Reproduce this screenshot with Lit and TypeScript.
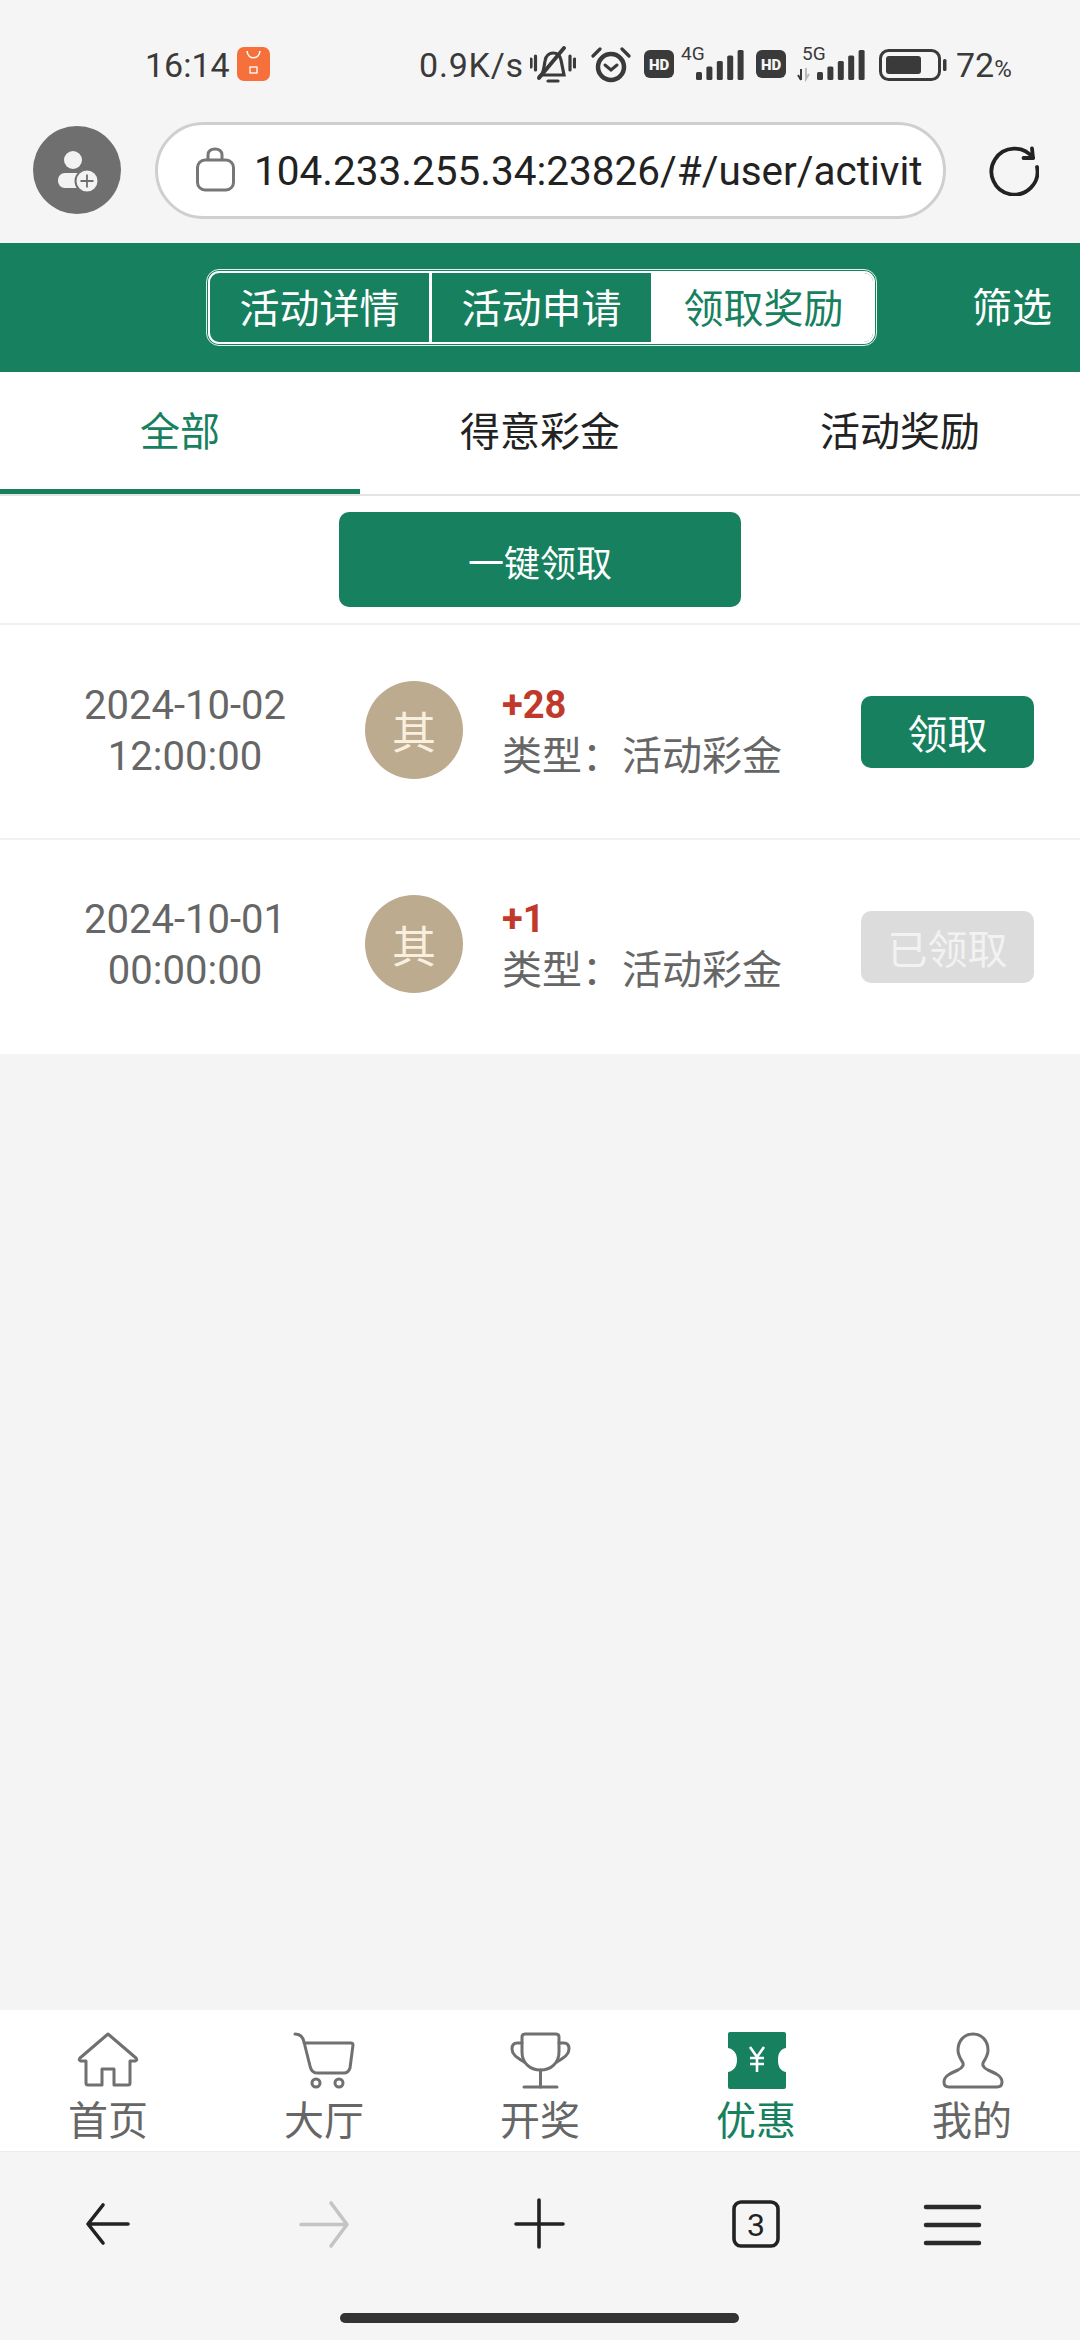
import { LitElement, html, css, svg } from "lit";
import { customElement } from "lit/decorators.js";

const records = [
  { date: "2024-10-02", time: "12:00:00", amount: "+28", done: false },
  { date: "2024-10-01", time: "00:00:00", amount: "+1", done: true },
];

const bars = (x0: number) =>
  [0, 1, 2, 3, 4].map((i) => {
    const h = 8 + i * 5.5;
    return svg`<rect x=${x0 + i * 10.4} y=${30 - h} width="6" height=${h} rx="1.5" fill="#3a3a3a"></rect>`;
  });

const tabIcons = {
  home: svg`<path d="M30 2 L2 26 Q0 28 3 29 H8 V51 Q8 53 10 53 H24 V37 H36 V53 H50 Q52 53 52 51 V29 H57 Q60 28 58 26 Z" fill="none" stroke="#707070" stroke-width="3" stroke-linejoin="round"></path>`,
  cart: svg`<g fill="none" stroke="#707070" stroke-width="3" stroke-linecap="round" stroke-linejoin="round"><path d="M1 2 C6 2 9 5 10 10 L16 34 C17 39 19 41 23 41 H50 C53 41 55 39 56 36 L59 13 C59 11 58 11 57 11 H10"></path><circle cx="22" cy="51" r="4"></circle><circle cx="45" cy="51" r="4"></circle></g>`,
  trophy: svg`<g fill="none" stroke="#707070" stroke-width="3" stroke-linecap="round" stroke-linejoin="round"><path d="M15 2 H46 Q49 2 49 5 V20 C49 31 41 38 30.500 38 C20 38 12 31 12 20 V5 Q12 2 15 2 Z"></path><path d="M12 11 H7 C3 11 2 14 2 17 C2 23 8 26 14 30"></path><path d="M49 11 H54 C58 11 59 14 59 17 C59 23 53 26 47 30"></path><path d="M30.500 38 V55"></path><path d="M14 55 H47"></path></g>`,
  ticket: svg`<path class="tk" d="M4 0 H58 a2 2 0 0 1 2 2 V16 C54 17 52 22 52 28 C52 34 54 39 60 40 V55 a2 2 0 0 1 -2 2 H4 a2 2 0 0 1 -2 -2 V40 C8 39 11 34 11 28 C11 22 8 17 2 16 V2 a2 2 0 0 1 2 -2 Z"></path><path d="M24 15 L31 25 L38 15 M24 26 H38 M24 32 H38 M31 25 V40" fill="none" stroke="#fff" stroke-width="2.600"></path>`,
  user: svg`<path d="M31 2 C22 2 16 9 16 18 C16 24 19 27 21 31 C22 34 20 36 16 38 C9 41 2 44 2 50 C2 54 4 55 7 55 H55 C58 55 60 54 60 50 C60 44 53 41 46 38 C42 36 40 34 41 31 C43 27 46 24 46 18 C46 9 40 2 31 2 Z" fill="none" stroke="#707070" stroke-width="3" stroke-linejoin="round"></path>`,
};

const tabs = [
  { label: "首页", icon: tabIcons.home },
  { label: "大厅", icon: tabIcons.cart },
  { label: "开奖", icon: tabIcons.trophy },
  { label: "优惠", icon: tabIcons.ticket, active: true },
  { label: "我的", icon: tabIcons.user },
];

@customElement("app-root")
export class AppRoot extends LitElement {
  static styles = css`
    :host {
      --green: #17805e;
      display: flex;
      flex-direction: column;
      width: 1080px;
      height: 2340px;
      background: #f4f4f4;
      font-family: Roboto, "Noto Sans CJK SC", sans-serif;
      overflow: hidden;
    }
    svg {
      display: block;
      flex: none;
    }
    .tk {
      fill: var(--green);
    }
    .status {
      height: 122px;
      box-sizing: border-box;
      padding: 47px 0 0 145px;
      background: #f5f5f5;
      display: flex;
      align-items: flex-start;
      color: #3a3a3a;
      flex: none;
    }
    .clock {
      font-size: 34px;
      line-height: 36px;
      width: 92px;
    }
    .mi {
      width: 33px;
      height: 34px;
      border-radius: 7px;
      background: #f5703a;
      margin-right: 149px;
    }
    .speed {
      font-size: 34px;
      line-height: 36px;
      letter-spacing: 0.8px;
      width: 111px;
    }
    .bell {
      margin-top: -1px;
    }
    .alarm {
      margin: -1px 0 0 15px;
    }
    .net {
      margin: -6px 0 0 13px;
    }
    .net.second {
      margin-left: 12px;
    }
    .hd {
      font-family: Roboto, sans-serif;
      font-weight: 900;
      font-size: 15px;
      fill: #f5f5f5;
    }
    .st-text {
      font-family: Roboto, sans-serif;
      font-size: 19px;
      fill: #3a3a3a;
    }
    .battery {
      margin: 2px 0 0 14px;
    }
    .pct {
      font-size: 34px;
      line-height: 36px;
      margin-left: 9px;
    }
    .pct small {
      font-size: 24px;
    }
    .addr-bar {
      height: 121px;
      flex: none;
      background: #f5f5f5;
      display: flex;
      align-items: flex-start;
      padding-left: 33px;
    }
    .me {
      width: 88px;
      height: 88px;
      border-radius: 50%;
      background: #6f6f6f;
      margin: 4px 34px 0 0;
      display: flex;
      align-items: center;
      justify-content: center;
    }
    .addr {
      width: 791px;
      height: 97px;
      box-sizing: border-box;
      border: 3px solid #cfcfcf;
      border-radius: 49px;
      background: #fff;
      display: flex;
      align-items: center;
      padding: 0 14px 0 36px;
      margin-right: 43px;
      color: #222;
      font-size: 40.5px;
      white-space: nowrap;
      overflow: hidden;
    }
    .lock {
      margin-top: -4px;
    }
    .url {
      margin-left: 18px;
    }
    .refresh {
      margin-top: 24px;
    }
    .head {
      height: 129px;
      flex: none;
      background: var(--green);
      display: flex;
      align-items: center;
      padding-left: 208px;
      font-size: 40px;
      color: #fff;
      box-sizing: border-box;
    }
    .seg {
      width: 667px;
      height: 73px;
      box-sizing: border-box;
      border: 2px solid #fff;
      outline: 1.5px solid #e4f2ed;
      outline-offset: 1px;
      border-radius: 11px;
      display: flex;
      overflow: hidden;
      margin-top: -1px;
    }
    .seg div {
      flex: 1;
      display: flex;
      align-items: center;
      justify-content: center;
      border-right: 3px solid #fff;
      padding-bottom: 3px;
    }
    .seg div:last-child {
      background: #fff;
      color: var(--green);
      border-right: 0;
    }
    .filter {
      margin: -6px 0 0 97px;
    }
    .tabs {
      height: 124px;
      flex: none;
      box-sizing: border-box;
      background: #fff;
      border-bottom: 2px solid #e4e4e4;
      display: grid;
      grid-template-columns: repeat(3, 1fr);
      font-size: 40px;
      color: #222;
    }
    .tabs div {
      display: flex;
      align-items: center;
      justify-content: center;
      padding-bottom: 8px;
    }
    .tabs .on {
      color: var(--green);
      border-bottom: 5px solid var(--green);
      padding-bottom: 3px;
    }
    .bulk {
      height: 129px;
      flex: none;
      box-sizing: border-box;
      background: #fff;
      border-bottom: 2px solid #f2f2f2;
      display: flex;
      justify-content: center;
      padding-top: 16px;
    }
    .bulk button,
    .take {
      border: 0;
      font-family: inherit;
      color: #fff;
      background: var(--green);
      border-radius: 10px;
    }
    .bulk button {
      width: 402px;
      height: 95px;
      padding: 2px 0 0;
      font-size: 36px;
    }
    .row {
      height: 215px;
      box-sizing: border-box;
      flex: none;
      background: #fff;
      display: flex;
      align-items: center;
      border-bottom: 2px solid #f2f2f2;
      padding-bottom: 3px;
    }
    .row + .row {
      height: 214px;
      border-bottom: 0;
      padding-bottom: 6px;
    }
    .when {
      width: 365px;
      box-sizing: border-box;
      padding: 1px 0 0 5px;
      text-align: center;
      font-size: 40px;
      line-height: 51px;
      color: #666;
    }
    .badge {
      width: 98px;
      height: 98px;
      border-radius: 50%;
      background: #bcab8e;
      color: #f8efdf;
      font-size: 44px;
      display: flex;
      align-items: center;
      justify-content: center;
      margin-right: 39px;
    }
    .info {
      flex: 1;
      padding-top: 1px;
      font-size: 40px;
      line-height: 51px;
      color: #666;
    }
    .amount {
      color: #c0392b;
      font-weight: 700;
      font-size: 38px;
    }
    .take {
      width: 173px;
      height: 72px;
      padding: 0;
      font-size: 40px;
      margin: 4px 46px 0 0;
    }
    .row + .row .take {
      margin-top: 6px;
    }
    .take[disabled] {
      background: #dcdcdc;
      color: #f2f2f2;
    }
    .spacer {
      flex: 1;
    }
    .nav {
      height: 142px;
      flex: none;
      box-sizing: border-box;
      background: #fff;
      display: grid;
      grid-template-columns: repeat(5, 216px);
      border-bottom: 1px solid #ececec;
    }
    .nav div {
      display: flex;
      flex-direction: column;
      align-items: center;
      padding-top: 22px;
      font-size: 40px;
      line-height: 50px;
      color: #666;
    }
    .nav svg {
      margin-bottom: 7px;
      overflow: visible;
    }
    .nav .on {
      color: var(--green);
    }
    .tools {
      height: 188px;
      flex: none;
      background: #f5f5f5;
      position: relative;
      display: grid;
      grid-template-columns: repeat(5, 216px);
      align-items: start;
      justify-items: center;
      padding-top: 44px;
      box-sizing: border-box;
    }
    .menu {
      margin-right: 40px;
    }
    .tab-count {
      font-size: 32px;
      fill: #222;
      font-family: Roboto, sans-serif;
    }
    .pill {
      position: absolute;
      left: 340px;
      top: 161px;
      width: 399px;
      height: 10px;
      border-radius: 5px;
      background: #333;
    }
  `;

  render() {
    return html`
      <div class="status">
        <div class="clock">16:14</div>
        <div class="mi">
          <svg width="33" height="34" viewBox="0 0 33 34">
            <path d="M10 4 C11 13 22 13 23 4" fill="none" stroke="#fff" stroke-width="1.600"></path>
            <rect x="13" y="20" width="7" height="6" fill="none" stroke="#fff" stroke-width="1.300"></rect>
          </svg>
        </div>
        <div class="speed">0.9K/s</div>
        <svg class="bell" width="46" height="38" viewBox="0 0 46 38">
          <g fill="none" stroke="#3a3a3a" stroke-width="3.200" stroke-linecap="round">
            <path d="M1 13 v8 M5.500 10 v14 M40 10 v14 M44.500 13 v8"></path>
            <path d="M11 29 C14 26 14 20 15 15 C16 9 20 7 23 7 C27 7 30 9 31 14 L34 29 Z"></path>
            <path d="M34 2 L9 32" stroke-width="3.800"></path>
            <path d="M18 35 H28"></path>
          </g>
        </svg>
        <svg class="alarm" width="40" height="37" viewBox="0 0 40 37">
          <g fill="none" stroke="#3a3a3a" stroke-linecap="round">
            <circle cx="20" cy="21" r="13" stroke-width="4.500"></circle>
            <path d="M14 19 L20 24 L26 19" stroke-width="3"></path>
            <path d="M2 10 L9 3 M31 3 L38 10" stroke-width="3.200"></path>
          </g>
        </svg>
        <svg class="net" width="100" height="42" viewBox="0 -6 100 42">
          <rect x="0" y="3" width="30" height="28" rx="6" fill="#3a3a3a"></rect>
          <text x="15" y="23" text-anchor="middle" class="hd">HD</text>
          <text x="37" y="13" class="st-text">4G</text>
          <g transform="translate(0,3)">${bars(52)}</g>
        </svg>
        <svg class="net second" width="109" height="42" viewBox="0 -6 109 42">
          <rect x="0" y="3" width="30" height="28" rx="6" fill="#3a3a3a"></rect>
          <text x="15" y="23" text-anchor="middle" class="hd">HD</text>
          <text x="46" y="13" class="st-text">5G</text>
          <path d="M45 22 v11 M42 28 l3 5" stroke="#3a3a3a" stroke-width="2" fill="none"></path>
          <path d="M50 21 v11 l3 -5" stroke="#bbb" stroke-width="2" fill="none"></path>
          <g transform="translate(0,3)">${bars(61)}</g>
        </svg>
        <svg class="battery" width="68" height="32" viewBox="0 0 68 32">
          <rect x="1.500" y="1.500" width="59" height="29" rx="8" fill="none" stroke="#3a3a3a" stroke-width="3"></rect>
          <rect x="7" y="7" width="35" height="18" rx="3" fill="#3a3a3a"></rect>
          <rect x="64" y="10" width="3.500" height="12" rx="1.500" fill="#3a3a3a"></rect>
        </svg>
        <div class="pct">72<small>%</small></div>
      </div>

      <div class="addr-bar">
        <div class="me">
          <svg width="46" height="48" viewBox="0 0 46 48">
            <circle cx="19" cy="14" r="9" fill="#f2f2f2"></circle>
            <path d="M11 27 H26 V42 H11 C7 42 4 39 4 34.500 C4 30 7 27 11 27 Z" fill="#f2f2f2"></path>
            <circle cx="33" cy="35" r="11.500" fill="#f2f2f2" stroke="#6f6f6f" stroke-width="2"></circle>
            <path d="M33 28.500 V41.500 M26.500 35 H39.500" stroke="#6f6f6f" stroke-width="1.800"></path>
          </svg>
        </div>
        <div class="addr">
          <svg class="lock" width="42" height="48" viewBox="0 0 42 48">
            <rect x="3.500" y="15" width="36" height="30" rx="7.500" fill="none" stroke="#777" stroke-width="3"></rect>
            <path d="M14 15 V10 C14 6 17 4 21 4 C25 4 28 6 28 10 V15" fill="none" stroke="#777" stroke-width="3"></path>
          </svg>
          <div class="url">104.233.255.34:23826/#/user/activit</div>
        </div>
        <svg class="refresh" width="50" height="50" viewBox="0 0 50 50">
          <path d="M44 12 A23 23 0 1 0 48 21" fill="none" stroke="#222" stroke-width="3.800" stroke-linecap="round"></path>
          <path d="M43 2.500 L44 12 L34.500 12" fill="none" stroke="#222" stroke-width="3.800" stroke-linejoin="round" stroke-linecap="round"></path>
        </svg>
      </div>

      <div class="head">
        <div class="seg">
          <div>活动详情</div>
          <div>活动申请</div>
          <div>领取奖励</div>
        </div>
        <div class="filter">筛选</div>
      </div>

      <div class="tabs">
        <div class="on">全部</div>
        <div>得意彩金</div>
        <div>活动奖励</div>
      </div>

      <div class="bulk"><button>一键领取</button></div>

      ${records.map(
        (r) => html`
          <div class="row">
            <div class="when">${r.date}<br />${r.time}</div>
            <div class="badge">其</div>
            <div class="info">
              <div class="amount">${r.amount}</div>
              <div>类型：活动彩金</div>
            </div>
            <button class="take" ?disabled=${r.done}>${r.done ? "已领取" : "领取"}</button>
          </div>
        `
      )}

      <div class="spacer"></div>

      <div class="nav">
        ${tabs.map(
          (t) => html`
            <div class=${t.active ? "on" : ""}>
              <svg width="60" height="58" viewBox="0 0 60 58">${t.icon}</svg>
              ${t.label}
            </div>
          `
        )}
      </div>

      <div class="tools">
        <svg width="60" height="60" viewBox="0 0 60 60">
          <path d="M50 28 H11 M25 9 L10 28 L25 47" fill="none" stroke="#222" stroke-width="3.600" stroke-linecap="round" stroke-linejoin="round"></path>
        </svg>
        <svg width="60" height="60" viewBox="0 0 60 60">
          <path d="M7 28.500 H52 M37 7 L53 28.500 L37 50" fill="none" stroke="#c4c4c4" stroke-width="3.600" stroke-linecap="round" stroke-linejoin="round"></path>
        </svg>
        <svg width="60" height="60" viewBox="0 0 60 60">
          <path d="M29 4 V51 M6 28 H53" fill="none" stroke="#222" stroke-width="3.600" stroke-linecap="round"></path>
        </svg>
        <svg width="60" height="60" viewBox="0 0 60 60">
          <rect x="8" y="6" width="44" height="44" rx="7" fill="none" stroke="#222" stroke-width="3.600"></rect>
          <text x="30" y="40" text-anchor="middle" class="tab-count">3</text>
        </svg>
        <svg class="menu" width="60" height="60" viewBox="0 0 60 60">
          <path d="M4 11 H57 M4 29 H57 M4 47 H57" fill="none" stroke="#2a2a2a" stroke-width="4.500" stroke-linecap="round"></path>
        </svg>
        <div class="pill"></div>
      </div>
    `;
  }
}
